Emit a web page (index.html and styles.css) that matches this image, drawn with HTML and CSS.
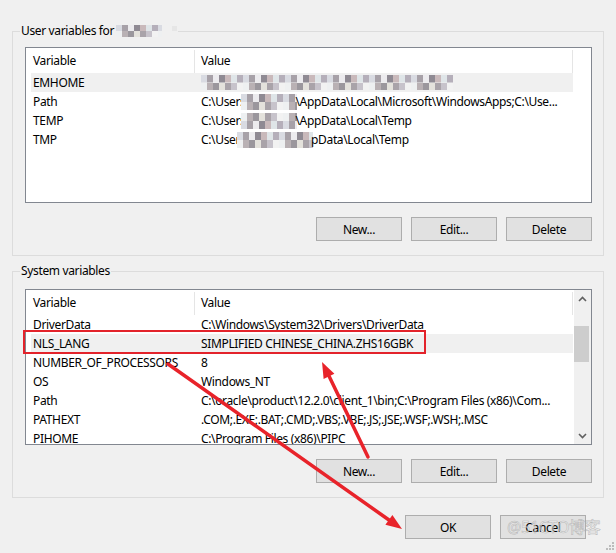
FILE: index.html
```html
<!DOCTYPE html>
<html>
<head>
<meta charset="utf-8">
<link rel="stylesheet" href="styles.css">
</head>
<body>
<div class="dialog">
  <fieldset class="group group-user">
    <legend class="group-title">User variables for<span class="mosaic mz-name"></span><span class="mz-dot"></span></legend>
    <div class="list">
      <div class="list-body">
        <div class="list-head">
          <span class="hcell hcell-var">Variable</span><span class="hdiv"></span><span class="hcell hcell-val">Value</span><span class="hdiv"></span>
        </div>
        <div class="row row-sel"><span class="cell-var">EMHOME</span><span class="cell-val"><span class="mosaic mz-long"></span></span></div>
        <div class="row"><span class="cell-var">Path</span><span class="cell-val">C:\Users<span class="mosaic mz-mid"></span>\AppData\Local\Microsoft\WindowsApps;C:\Use...</span></div>
        <div class="row"><span class="cell-var">TEMP</span><span class="cell-val">C:\Users<span class="mosaic mz-mid mz-alt"></span>\AppData\Local\Temp</span></div>
        <div class="row"><span class="cell-var">TMP</span><span class="cell-val">C:\User<span class="mosaic mz-wide"></span>pData\Local\Temp</span></div>
      </div>
    </div>
    <div class="btn-row">
      <button class="btn">New...</button>
      <button class="btn">Edit...</button>
      <button class="btn">Delete</button>
    </div>
  </fieldset>

  <fieldset class="group group-sys">
    <legend class="group-title">System variables</legend>
    <div class="list">
      <div class="list-body">
        <div class="list-head">
          <span class="hcell hcell-var">Variable</span><span class="hdiv"></span><span class="hcell hcell-val">Value</span><span class="hdiv"></span>
        </div>
        <div class="row"><span class="cell-var">DriverData</span><span class="cell-val">C:\Windows\System32\Drivers\DriverData</span></div>
        <div class="row row-sel"><span class="cell-var">NLS_LANG</span><span class="cell-val">SIMPLIFIED CHINESE_CHINA.ZHS16GBK</span></div>
        <div class="row"><span class="cell-var">NUMBER_OF_PROCESSORS</span><span class="cell-val">8</span></div>
        <div class="row"><span class="cell-var">OS</span><span class="cell-val">Windows_NT</span></div>
        <div class="row"><span class="cell-var">Path</span><span class="cell-val">C:\oracle\product\12.2.0\client_1\bin;C:\Program Files (x86)\Com...</span></div>
        <div class="row"><span class="cell-var">PATHEXT</span><span class="cell-val">.COM;.EXE;.BAT;.CMD;.VBS;.VBE;.JS;.JSE;.WSF;.WSH;.MSC</span></div>
        <div class="row"><span class="cell-var">PIHOME</span><span class="cell-val">C:\Program Files (x86)\PIPC</span></div>
      </div>
      <div class="list-gap"></div>
      <div class="scrollbar">
        <div class="sb-btn"><svg width="9" height="6" viewBox="0 0 9 6"><path d="M1 5 L4.5 1.5 L8 5" fill="none" stroke="#606060" stroke-width="1.6"/></svg></div>
        <div class="sb-track"><div class="sb-thumb"></div></div>
        <div class="sb-btn"><svg width="9" height="6" viewBox="0 0 9 6"><path d="M1 1 L4.5 4.5 L8 1" fill="none" stroke="#606060" stroke-width="1.6"/></svg></div>
      </div>
    </div>
    <div class="btn-row">
      <button class="btn">New...</button>
      <button class="btn">Edit...</button>
      <button class="btn">Delete</button>
    </div>
  </fieldset>

  <div class="footer">
    <button class="btn">OK</button>
    <button class="btn">Cancel</button>
  </div>

  <div class="highlight-box"></div>
  <svg class="arrows" width="616" height="553" viewBox="0 0 616 553">
    <line x1="168" y1="364" x2="389" y2="520" stroke="#e8232a" stroke-width="3.5" stroke-linecap="round"/>
    <polygon points="402,529 385.4,524.7 392.4,514.9" fill="#e8232a"/>
    <line x1="368" y1="457" x2="329" y2="376" stroke="#e8232a" stroke-width="3.5" stroke-linecap="round"/>
    <polygon points="322,362 334.4,373.8 323.6,379" fill="#e8232a"/>
  </svg>
  <div class="watermark">@51CTO博客</div>
  <svg class="grip" width="10" height="10" viewBox="0 0 10 10">
    <rect x="8" y="0" width="2" height="2" fill="#bcbcbc"/>
    <rect x="5" y="3" width="2" height="2" fill="#bcbcbc"/>
    <rect x="8" y="3" width="2" height="2" fill="#bcbcbc"/>
    <rect x="2" y="6" width="2" height="2" fill="#bcbcbc"/>
    <rect x="5" y="6" width="2" height="2" fill="#bcbcbc"/>
    <rect x="8" y="6" width="2" height="2" fill="#bcbcbc"/>
  </svg>
</div>
</body>
</html>
```
FILE: styles.css
```css
* { box-sizing: border-box; }
html, body { margin: 0; padding: 0; background: #f0f0f0; }
body {
  font-family: "Noto Sans", "Open Sans", "Liberation Sans", sans-serif;
  font-size: 12px;
  letter-spacing: -0.35px;
  color: #000;
}
.dialog {
  position: relative;
  width: 616px;
  height: 553px;
  padding-top: 23px;
  overflow: hidden;
}
.group {
  margin: 0 0 0 12px;
  width: 592px;
  border: 1px solid #dcdcdc;
  padding: 8px 11px 14px 12px;
  min-inline-size: 0;
}
.group-sys { margin-top: 7px; padding-top: 10px; }
.group-title {
  padding: 0 1px;
  margin-left: -5px;
  line-height: 16px;
  height: 16px;
  display: flex;
  align-items: center;
}
.mosaic {
  display: inline-block;
  height: 14px;
  vertical-align: middle;
  background-image:
    repeating-linear-gradient(90deg, #d9dbe2 0 6px, #a7a1a8 6px 12px, #ecebee 12px 18px, #8f8a93 18px 24px, #c9b9bb 24px 30px, #dfe5e8 30px 36px, #b5afba 36px 42px),
    repeating-linear-gradient(90deg, #eef0f1 0 6px, #b9b1b4 6px 12px, #9b979d 12px 18px, #e4e2dc 18px 24px, #a9a3a9 24px 30px, #c7c3cb 30px 36px, #f2f2f2 36px 42px);
  background-size: 100% 50%, 100% 50%;
  background-position: top, bottom;
  background-repeat: no-repeat;
}
.mz-name { width: 46px; height: 12px; margin-left: 2px; }
.mz-dot { display: inline-block; width: 5px; height: 5px; background: #e6e6e6; margin-left: 10px; margin-top: -6px; }
.mz-long { width: 252px; height: 15px; }
.mz-mid { width: 56px; height: 16px; margin: 0 -2px 0 -4px; }
.mz-alt { background-position: bottom, top; }
.mz-wide { width: 76px; height: 16px; margin: 0 -2px 0 -3px; }

.list {
  width: 567px;
  height: 156px;
  border: 1px solid #828790;
  background: #fff;
  padding-left: 5px;
  display: flex;
  overflow: hidden;
}
.list-body { width: 542px; flex: none; }
.list-gap { width: 1px; flex: none; }
.list-head {
  height: 25px;
  display: flex;
  align-items: center;
}
.hcell { line-height: 16px; white-space: nowrap; overflow: hidden; }
.hcell-var { width: 163px; padding-left: 2px; }
.hcell-val { width: 377px; padding-left: 6px; }
.hdiv { width: 1px; height: 23px; background: #e5e5e5; align-self: flex-end; }
.row {
  height: 19px;
  line-height: 19px;
  display: flex;
  white-space: nowrap;
}
.row-sel { background: #f0f0f0; }
.cell-var { width: 164px; padding-left: 2px; overflow: hidden; flex: none; }
.cell-val { width: 378px; padding-left: 6px; overflow: hidden; flex: none; display: flex; align-items: center; }

.scrollbar {
  width: 17px;
  flex: none;
  background: #f0f0f0;
  display: flex;
  flex-direction: column;
}
.sb-btn { height: 17px; display: flex; align-items: center; justify-content: center; }
.sb-track { flex: 1; padding-top: 19px; }
.sb-thumb { width: 15px; height: 36px; background: #cdcdcd; }

.btn-row {
  display: flex;
  justify-content: flex-end;
  gap: 9px;
  margin-top: 14px;
  width: 567px;
}
.btn {
  width: 86px;
  height: 24px;
  background: #e1e1e1;
  border: 1px solid #adadad;
  font: inherit;
  letter-spacing: inherit;
  color: #000;
  padding: 0;
  margin: 0;
}
.footer {
  display: flex;
  gap: 9px;
  margin: 17px 0 0 405px;
}

.highlight-box {
  position: absolute;
  left: 23px;
  top: 330px;
  width: 403px;
  height: 24px;
  border: 2px solid #e3232b;
}
.arrows { position: absolute; left: 0; top: 0; pointer-events: none; }
.watermark {
  position: absolute;
  left: 507px;
  top: 517px;
  font-size: 16px;
  line-height: 20px;
  color: rgba(255, 255, 255, 0.55);
  -webkit-text-stroke: 0.6px rgba(140, 140, 140, 0.55);
  font-family: "Noto Sans", "Noto Sans CJK SC", sans-serif;
  letter-spacing: -0.3px;
}
.grip { position: absolute; right: 2px; bottom: 1px; }
```
